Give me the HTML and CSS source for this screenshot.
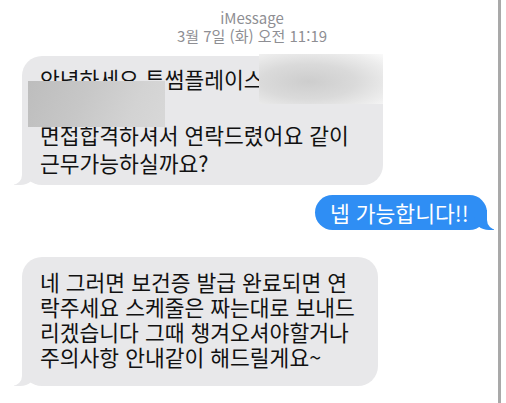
FILE: index.html
```html
<!DOCTYPE html>
<html lang="ko">
<head>
  <meta charset="UTF-8" />
  <meta name="viewport" content="width=device-width, initial-scale=1.0"/>
  <title>iMessage</title>
  <link rel="stylesheet" href="styles.css">
</head>
<body>

  <div class="thread">
    <!-- 상단 정보 -->
    <div class="thread-head">
      <div>iMessage</div>
      <div>3월 7일 (화) 오전 11:19</div>
    </div>

    <!-- 받은 메시지 1 -->
    <div class="bubble received first">
      안녕하세요 투썸플레이스<br>
      &nbsp;<br>
      면접합격하셔서 연락드렸어요 같이<br>
      근무가능하실까요?
      <div class="mask mask-a"></div>
      <div class="mask mask-b"></div>
    </div>

    <!-- 보낸 메시지 -->
    <div class="bubble sent">넵 가능합니다!!</div>

    <!-- 받은 메시지 2 -->
    <div class="bubble received third">
      네 그러면 보건증 발급 완료되면 연<br>
      락주세요 스케줄은 짜는대로 보내드<br>
      리겠습니다 그때 챙겨오셔야할거나<br>
      주의사항 안내같이 해드릴게요~
    </div>
  </div>

</body>
</html>
```

FILE: styles.css
```css
body {
  margin: 0;
  background: #fff;
  font-family: "Noto Sans CJK KR", "Noto Sans", sans-serif;
  overflow: hidden;
}
.thread {
  width: 498px;
  height: 403px;
  border-right: 3px solid #a9a9a9;
}
.thread-head {
  padding: 9px 0 0 6px;
  text-align: center;
  color: #8e8e93;
  font-size: 15px;
  line-height: 18px;
}
.bubble {
  position: relative;
  box-sizing: border-box;
  border-radius: 20px;
  font-size: 21.5px;
  white-space: nowrap;
  color: #111;
}
.bubble.received {
  background: #e8e8ea;
  margin-left: 22px;
}
.bubble.received::before,
.bubble.received::after {
  content: "";
  position: absolute;
  bottom: 0;
  height: 22px;
}
.bubble.received::before {
  left: -8px;
  width: 22px;
  background: #e8e8ea;
  border-bottom-right-radius: 16px 14px;
}
.bubble.received::after {
  left: -11px;
  width: 11px;
  background: #fff;
  border-bottom-right-radius: 10px;
}
.bubble.first {
  margin-top: 11px;
  width: 361px;
  padding: 9px 18px 8px;
  line-height: 28px;
}
.bubble.third {
  margin-top: 27px;
  width: 356px;
  padding: 12px 18px 17px;
  line-height: 25px;
}
.bubble.sent {
  background: #2f8ef4;
  color: #fff;
  width: 172px;
  margin: 10px 11px 0 auto;
  padding: 5px 14px 5px 15px;
  line-height: 25px;
  border-radius: 18px;
}
.bubble.sent::before,
.bubble.sent::after {
  content: "";
  position: absolute;
  bottom: 0;
  height: 20px;
}
.bubble.sent::before {
  right: -7px;
  width: 20px;
  background: #2f8ef4;
  border-bottom-left-radius: 15px 13px;
}
.bubble.sent::after {
  right: -10px;
  width: 10px;
  background: #fff;
  border-bottom-left-radius: 10px;
}
.mask {
  position: absolute;
}
.mask-a {
  left: 237px;
  top: -2px;
  width: 124px;
  height: 50px;
  background: radial-gradient(ellipse at 40% 55%, #cdcdcd 0%, #dadada 45%, #ededed 80%, #fafafa 100%);
}
.mask-b {
  left: 6px;
  top: 25px;
  width: 137px;
  height: 46px;
  background: linear-gradient(115deg, #bdbdbd 0%, #c7c7c7 40%, #d3d3d3 75%, #d8d8d8 100%);
}
```
